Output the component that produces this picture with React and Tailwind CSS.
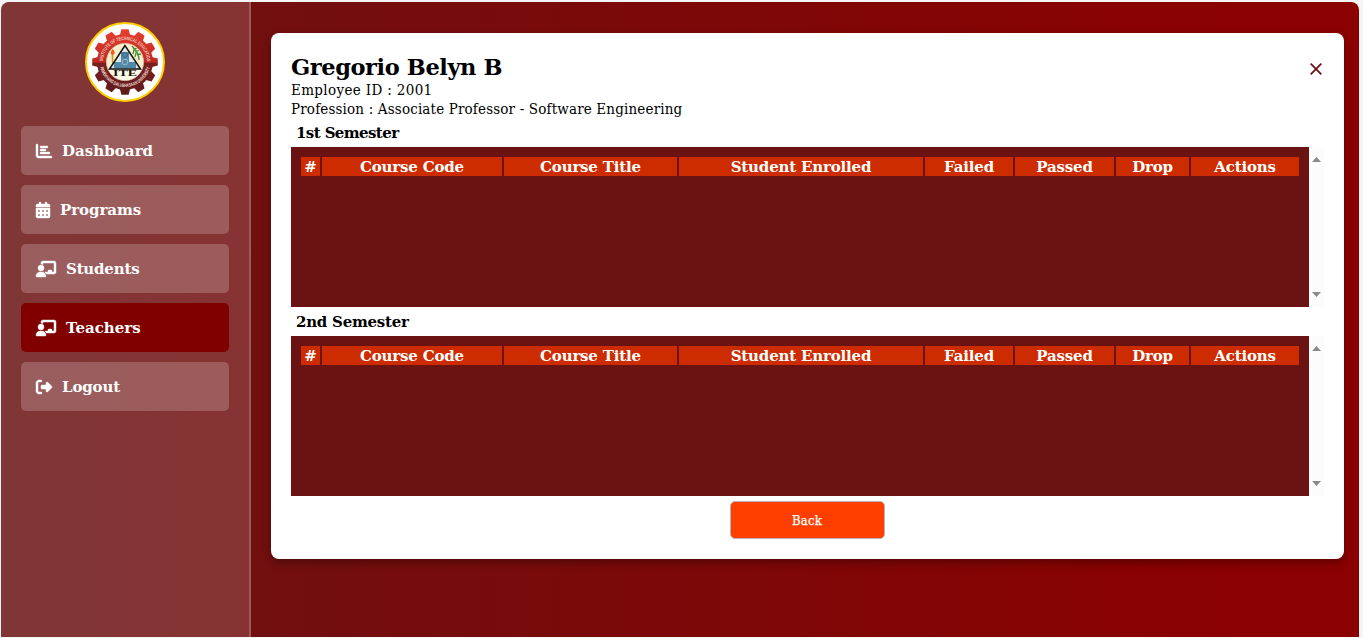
import React from "react";
import { FaChartBar, FaCalendarDays, FaChalkboardUser, FaRightFromBracket } from "react-icons/fa6";

const NAV = [
  { label: "Dashboard", Icon: FaChartBar, size: "w-4", track: "tracking-[0.05px]" },
  { label: "Programs", Icon: FaCalendarDays, size: "w-3.5", track: "tracking-[-0.05px]" },
  { label: "Students", Icon: FaChalkboardUser, size: "w-5", track: "tracking-[-0.2px]" },
  { label: "Teachers", Icon: FaChalkboardUser, size: "w-5", track: "tracking-[0px]", active: true },
  { label: "Logout", Icon: FaRightFromBracket, size: "w-4", track: "tracking-[-0.15px]" },
];

const COLUMNS = ["#", "Course Code", "Course Title", "Student Enrolled", "Failed", "Passed", "Drop", "Actions"];

const TEETH = Array.from({ length: 12 }, (_, i) => i * 30);

function Logo() {
  return (
    <svg viewBox="0 0 80 80" className="size-20 shrink-0">
      <defs>
        <linearGradient id="gear" x1="0" y1="0" x2="0" y2="1">
          <stop offset="0" stopColor="#e8402f" />
          <stop offset="0.5" stopColor="#bd2a22" />
          <stop offset="0.52" stopColor="#7a2020" />
          <stop offset="1" stopColor="#5c1a1a" />
        </linearGradient>
        <mask id="gearShape">
          <circle cx="40" cy="40" r="28" fill="#fff" />
          {TEETH.map((a) => (
            <path key={a} d="M34.9 13 L36.4 7.2 H43.6 L45.1 13 Z" fill="#fff" transform={`rotate(${a} 40 40)`} />
          ))}
        </mask>
        <path id="arcTop" d="M18.2 43 A22 22 0 1 1 61.8 43" />
        <path id="arcBottom" d="M14.8 44 A25.6 25.6 0 0 0 65.2 44" />
        <clipPath id="disc"><circle cx="40" cy="40" r="18" /></clipPath>
      </defs>
      <circle cx="40" cy="40" r="39" fill="#fff" stroke="#fc0" strokeWidth="2" />
      <rect x="6" y="6" width="68" height="68" fill="url(#gear)" mask="url(#gearShape)" />
      <circle cx="40" cy="40" r="18.6" fill="#f8eecb" stroke="#dcc4b4" strokeWidth="0.8" />
      <g clipPath="url(#disc)">
        <path d="M22 48 H58 V60 H22 Z" fill="#fff9e8" />
        <path d="M26.5 33 L28.5 33 L28.2 43 H27.2 Z" fill="#c99a35" />
        <path d="M27.5 27 C31 30 29.5 33 27.5 33 C25 32.5 25.5 29.5 27.5 27" fill="#ef5a22" />
        <path d="M47 24 C50 28 54 30 54 38 M48 27 l5 -1 M50 30 l5 -2 M52 33 l4 -1 M49 28 l-1 4 M51 31 l-1 4" stroke="#3f8f3a" strokeWidth="1.3" fill="none" />
      </g>
      <path d="M40 23.5 L24.5 47 H55.5 Z" fill="#dfe6e4" />
      <path d="M36 30 H44 V40 H51 V46.2 H29 V40 H36 Z" fill="#5488a9" />
      <circle cx="40" cy="33" r="2.4" fill="none" stroke="#315c79" strokeWidth="0.8" />
      <circle cx="40" cy="40" r="2.8" fill="none" stroke="#a4c4d4" strokeWidth="0.8" />
      <path d="M40 23.5 L24.5 47 H55.5 Z" fill="none" stroke="#111" strokeWidth="1.5" />
      <text x="40" y="53.8" textAnchor="middle" textLength="24" lengthAdjust="spacingAndGlyphs" fontSize="8.5" fontWeight="700" fill="#111" fontFamily="Liberation Serif, serif">ITE</text>
      <text fontSize="5" fontWeight="700" fill="#f0c9c0" fontFamily="Liberation Sans, sans-serif">
        <textPath href="#arcTop" startOffset="4" textLength="67" lengthAdjust="spacingAndGlyphs">INSTITUTE OF TECHNICAL EDUCATION</textPath>
      </text>
      <text fontSize="5" fontWeight="700" fill="#ecd8d4" fontFamily="Liberation Sans, sans-serif">
        <textPath href="#arcBottom" startOffset="1.5" textLength="68" lengthAdjust="spacingAndGlyphs">PAMBAYANG DALUBHASAAN UNIVERSITY</textPath>
      </text>
    </svg>
  );
}

function Arrow({ down }) {
  return (
    <svg viewBox="0 0 9 5" className="h-[5px] w-[9px]">
      <path d={down ? "M0 0H9L4.5 5Z" : "M0 5H9L4.5 0Z"} fill="#8a8a8a" />
    </svg>
  );
}

function Semester({ title, track }) {
  return (
    <section>
      <h3 className={`flex h-[29px] items-center pt-px pl-[5px] text-[15px] leading-none font-bold ${track}`}>{title}</h3>
      <div className="flex h-40">
        <div className="flex-1 bg-[#6b1313] p-2.5">
          <div className="grid grid-cols-[19px_180px_173px_244px_88px_99px_73px_108px] gap-0.5 text-center text-[15px] leading-[21px] font-bold tracking-[-0.18px] text-white">
            {COLUMNS.map((c) => (
              <div key={c} className="h-[19px] bg-[#cc2c00]">{c}</div>
            ))}
          </div>
        </div>
        <div className="flex w-[15px] flex-col items-center justify-between bg-[#fcfcfc] py-2.5">
          <Arrow />
          <Arrow down />
        </div>
      </div>
    </section>
  );
}

export default function App() {
  return (
    <div className="h-[638px] overflow-hidden bg-[#f5f5f5] pt-0.5 pr-1 pb-px pl-px font-['DejaVu_Serif',serif]">
      <div className="flex h-full overflow-hidden rounded-t-[8px] bg-[linear-gradient(90deg,#6b1313,#8b0000_92%)]">
        <aside className="flex w-[250px] shrink-0 flex-col items-center border-r-2 border-white/20 bg-white/15 px-5 pt-5">
          <Logo />
          <nav className="mt-6 flex w-full flex-col gap-2.5">
            {NAV.map(({ label, Icon, size, track, active }) => (
              <a
                key={label}
                className={`flex h-[49px] items-center gap-2.5 rounded-[5px] pl-[15px] text-[15px] font-bold text-white ${track} ${active ? "bg-[#800000]" : "bg-white/20"}`}
              >
                <Icon className={`h-4 overflow-visible ${size}`} stroke="currentColor" strokeWidth="14" />
                <span className="pt-px">{label}</span>
              </a>
            ))}
          </nav>
        </aside>
        <main className="flex-1 pt-[31px] pr-[15px] pl-5">
          <div className="h-[526px] rounded-lg bg-white p-5 text-black shadow-[0_4px_8px_rgba(0,0,0,0.3)]">
            <header className="flex h-[65px] items-start justify-between">
              <div className="pt-px">
                <h2 className="text-[22.5px] leading-[27px] font-bold tracking-[-0.4px]">Gregorio Belyn B</h2>
                <p className="font-['DejaVu_Serif_Condensed','DejaVu_Serif',serif] text-[15px] leading-[19px] tracking-[0.35px]">Employee ID : 2001</p>
                <p className="font-['DejaVu_Serif_Condensed','DejaVu_Serif',serif] text-[15px] leading-[19px] tracking-[0.16px]">Profession : Associate Professor - Software Engineering</p>
              </div>
              <svg viewBox="0 0 12 12" className="mt-[9.5px] mr-0.5 size-3">
                <path d="M0.7 0.7 L11.3 11.3 M11.3 0.7 L0.7 11.3" stroke="#6b1313" strokeWidth="1.8" />
              </svg>
            </header>
            <Semester title="1st Semester" track="tracking-[-0.6px]" />
            <Semester title="2nd Semester" track="tracking-[-0.25px]" />
            <div className="flex justify-center pt-[5px] pr-px">
              <button className="h-[38px] w-[155px] rounded-[5px] border border-[#b5b5b5] bg-[#ff3f00] pt-px font-['DejaVu_Serif_Condensed','DejaVu_Serif',serif] text-[13px] tracking-[0.2px] text-white [-webkit-text-stroke:0.25px_white]">Back</button>
            </div>
          </div>
        </main>
      </div>
    </div>
  );
}
